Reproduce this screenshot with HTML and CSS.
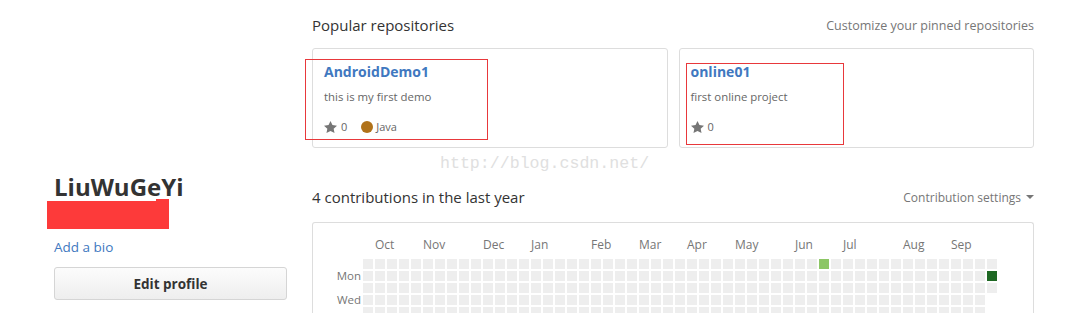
FILE: index.html
```html
<!DOCTYPE html>
<html lang="en">
<head>
<meta charset="utf-8">
<title>LiuWuGeYi</title>
<link rel="stylesheet" href="styles.css">
</head>
<body>
<div class="page">
  <aside class="sidebar">
    <h1 class="name">LiuWuGeYi</h1>
    <div class="redacted"></div>
    <a class="bio" href="#">Add a bio</a>
    <button class="edit-btn" type="button">Edit profile</button>
  </aside>
  <main class="main">
    <div class="section-head top">
      <h2 class="heading">Popular repositories</h2>
      <a class="muted-link" href="#">Customize your pinned repositories</a>
    </div>
    <div class="cards">
      <div class="card">
        <a class="repo-name" href="#">AndroidDemo1</a>
        <p class="repo-desc">this is my first demo</p>
        <div class="repo-meta">
          <span class="stars"><svg class="star" viewBox="0 0 14 16" width="14" height="16"><path d="M14 6l-4.9-.64L7 1 4.9 5.36 0 6l3.6 3.26L2.67 14 7 11.67 11.33 14l-.93-4.74z"/></svg>0</span>
          <span class="lang"><span class="lang-dot"></span>Java</span>
        </div>
        <div class="mark mark-one"></div>
      </div>
      <div class="card">
        <a class="repo-name" href="#">online01</a>
        <p class="repo-desc">first online project</p>
        <div class="repo-meta">
          <span class="stars"><svg class="star" viewBox="0 0 14 16" width="14" height="16"><path d="M14 6l-4.9-.64L7 1 4.9 5.36 0 6l3.6 3.26L2.67 14 7 11.67 11.33 14l-.93-4.74z"/></svg>0</span>
        </div>
        <div class="mark mark-two"></div>
      </div>
    </div>
    <div class="watermark">http://blog.csdn.net/</div>
    <div class="section-head contrib">
      <h2 class="heading">4 contributions in the last year</h2>
      <a class="muted-link settings" href="#">Contribution settings<span class="caret"></span></a>
    </div>
    <div class="calendar">
      <div class="months">
        <span style="grid-column: 2">Oct</span>
        <span style="grid-column: 6">Nov</span>
        <span style="grid-column: 11">Dec</span>
        <span style="grid-column: 15">Jan</span>
        <span style="grid-column: 20">Feb</span>
        <span style="grid-column: 24">Mar</span>
        <span style="grid-column: 28">Apr</span>
        <span style="grid-column: 32">May</span>
        <span style="grid-column: 37">Jun</span>
        <span style="grid-column: 41">Jul</span>
        <span style="grid-column: 46">Aug</span>
        <span style="grid-column: 50">Sep</span>
      </div>
      <div class="graph">
        <div class="days">
          <span></span><span>Mon</span><span></span><span>Wed</span>
        </div>
        <div class="cells" id="cells"></div>
      </div>
    </div>
  </main>
</div>
<script src="script.js"></script>
</body>
</html>
```
FILE: styles.css
```css
* { box-sizing: border-box; }
body {
  margin: 0;
  font-family: "Open Sans", "Noto Sans", sans-serif;
  color: #333;
  background: #fff;
  overflow: hidden;
}
a { text-decoration: none; }
.page {
  display: flex;
  gap: 25px;
  padding: 0 38px 0 54px;
}
.sidebar {
  width: 233px;
  flex: none;
  padding-top: 172px;
  display: flex;
  flex-direction: column;
  align-items: flex-start;
}
.name {
  margin: 0;
  font-size: 24px;
  line-height: 29px;
  font-weight: 700;
  color: #333;
}
.redacted {
  position: relative;
  width: 122px;
  height: 28px;
  margin-left: -7px;
  background: #fd3a3a;
}
.redacted::after {
  content: "";
  position: absolute;
  right: 0;
  top: -2px;
  width: 13px;
  height: 2px;
  background: #fd3a3a;
}
.bio {
  margin-top: 8px;
  font-size: 13.5px;
  line-height: 20px;
  color: #4078c0;
}
.edit-btn {
  margin-top: 10px;
  width: 233px;
  height: 33px;
  border: 1px solid #d5d5d5;
  border-radius: 3px;
  background: linear-gradient(#fcfcfc, #eee);
  font-family: inherit;
  font-size: 13.5px;
  font-weight: 700;
  color: #333;
}
.main {
  flex: 1;
  position: relative;
  min-width: 0;
}
.section-head {
  display: flex;
  justify-content: space-between;
  align-items: center;
  height: 22px;
}
.section-head.top { margin-top: 14px; }
.section-head.contrib { margin-top: 38px; }
.heading {
  margin: 0;
  font-size: 15px;
  font-weight: 400;
  line-height: 22px;
  color: #333;
}
.muted-link {
  font-size: 12.5px;
  color: #767676;
}
.settings {
  display: flex;
  align-items: center;
  font-size: 12px;
}
.caret {
  display: inline-block;
  margin-left: 5px;
  border-top: 4px solid #767676;
  border-left: 4px solid transparent;
  border-right: 4px solid transparent;
}
.cards {
  display: grid;
  grid-template-columns: 1fr 1fr;
  gap: 11px;
  margin-top: 12px;
}
.card {
  position: relative;
  height: 100px;
  border: 1px solid #ddd;
  border-radius: 3px;
  padding: 13px 11px 0;
}
.repo-name {
  display: block;
  font-size: 14px;
  font-weight: 700;
  line-height: 20px;
  color: #4078c0;
}
.repo-desc {
  margin: 6px 0 0;
  font-size: 11.4px;
  line-height: 18px;
  color: #666;
}
.repo-meta {
  margin-top: 12px;
  display: flex;
  align-items: center;
  gap: 14px;
  font-size: 11px;
  line-height: 18px;
  color: #666;
}
.stars, .lang {
  display: flex;
  align-items: center;
}
.star {
  width: 13px;
  height: 15px;
  fill: #767676;
  margin-right: 4px;
}
.lang-dot {
  width: 12px;
  height: 12px;
  border-radius: 50%;
  background: #b07219;
  margin-right: 3px;
}
.mark {
  position: absolute;
  border: 1px solid #e8383b;
  pointer-events: none;
}
.mark-one { left: -8px; top: 10px; width: 183px; height: 81px; }
.mark-two { left: 6px; top: 14px; width: 158px; height: 82px; }
.watermark {
  position: absolute;
  left: 128px;
  top: 154px;
  font-family: "Liberation Mono", "DejaVu Sans Mono", monospace;
  font-size: 16.6px;
  line-height: 20px;
  color: #e0e0e0;
  white-space: nowrap;
}
.calendar {
  margin-top: 14px;
  border: 1px solid #ddd;
  border-bottom: none;
  border-radius: 3px 3px 0 0;
  padding: 15px 0 0 50px;
  height: 100px;
}
.months {
  display: grid;
  grid-template-columns: repeat(53, 10px);
  column-gap: 2px;
  font-size: 12px;
  line-height: 14px;
  color: #767676;
}
.months span { white-space: nowrap; grid-row: 1; }
.graph {
  display: flex;
  margin-top: 7px;
  margin-left: -30px;
}
.days {
  width: 28px;
  margin-right: 2px;
  display: grid;
  grid-template-rows: repeat(4, 10px);
  row-gap: 2px;
  align-content: start;
  font-size: 11.5px;
  line-height: 10px;
  color: #767676;
  text-align: right;
}
.cells {
  display: grid;
  grid-template-rows: repeat(7, 10px);
  grid-auto-flow: column;
  grid-auto-columns: 10px;
  gap: 2px;
}
.cell { background: #eee; }
.cell.l1 { background: #8cc665; }
.cell.l4 { background: #1e6823; }
```
FILE: script.js
```js
(function () {
  var grid = document.getElementById('cells');
  var total = 52 * 7 + 3;
  var levels = { 266: 'l1', 365: 'l4' };
  for (var i = 0; i < total; i++) {
    var c = document.createElement('div');
    c.className = 'cell' + (levels[i] ? ' ' + levels[i] : '');
    grid.appendChild(c);
  }
})();
```
